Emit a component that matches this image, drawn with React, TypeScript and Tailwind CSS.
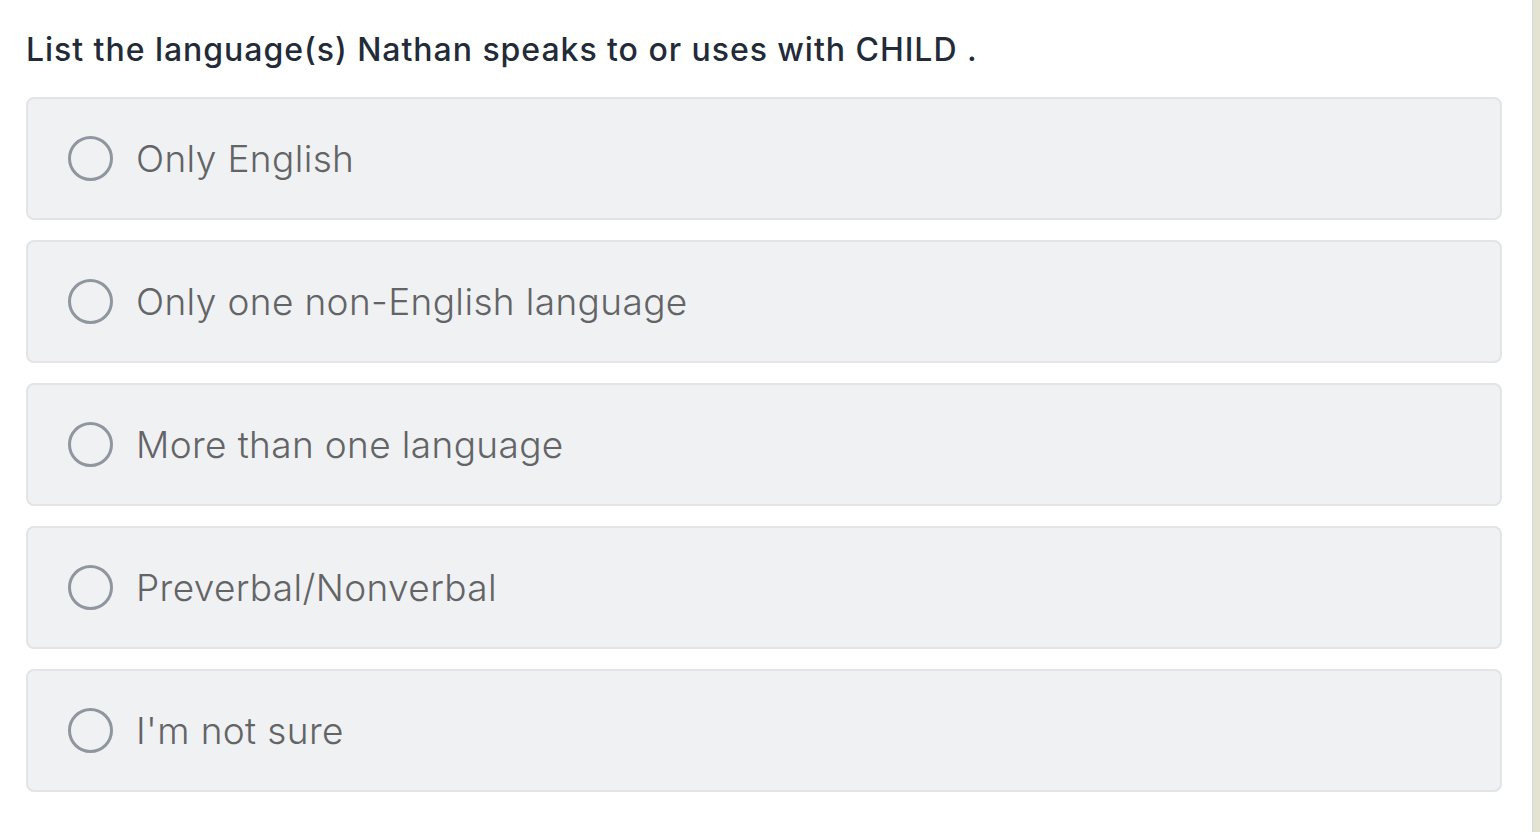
import { useState } from 'react';

const options = [
  'Only English',
  'Only one non-English language',
  'More than one language',
  'Preverbal/Nonverbal',
  "I'm not sure",
];

export default function App() {
  const [selected, setSelected] = useState<string | null>(null);

  return (
    <div className="flex h-[832px] w-full bg-white font-['Inter','Lato',sans-serif]">
      <div className="flex-1 pl-[26px] pr-[30px] pt-[30px]">
        {/* Question */}
        <h2 className="mb-[27px] text-[32px] leading-[40px] font-medium tracking-[0.03em] text-[#232b39]">
          List the language(s) Nathan speaks to or uses with CHILD .
        </h2>

        {/* Options */}
        <div className="flex flex-col gap-[20px]">
          {options.map((option) => (
            <button
              key={option}
              onClick={() => setSelected(option)}
              className="flex h-[123px] w-full items-center gap-[23px] rounded-[8px] border-2 border-[#e3e4e8] bg-[#f0f1f3] pl-[40px] text-left"
            >
              <span className="flex h-[45px] w-[45px] shrink-0 items-center justify-center rounded-full border-[3.5px] border-[#8f969f]">
                {selected === option && <span className="h-[22px] w-[22px] rounded-full bg-[#8f969f]" />}
              </span>
              <span className="text-[37px] font-light tracking-[0.01em] text-[#636466]">{option}</span>
            </button>
          ))}
        </div>
      </div>

      {/* Right edge panel */}
      <div className="w-[8px] border-l border-[#d6dbe8] bg-[#e4e2d0]" />
    </div>
  );
}
